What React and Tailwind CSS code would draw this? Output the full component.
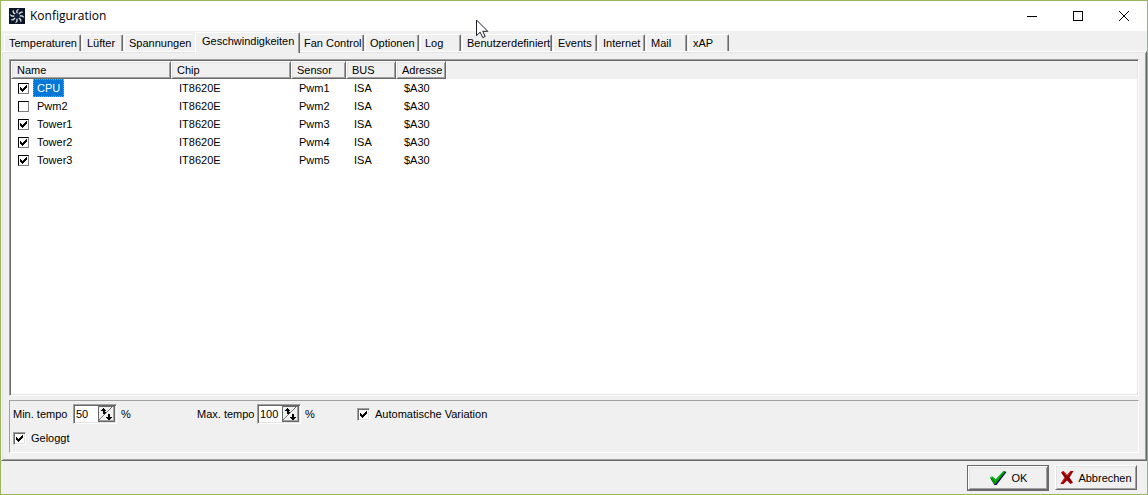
import React, { useState } from 'react';

const TABS = [
  { name: 'Temperaturen', width: 'w-[77px]' },
  { name: 'Lüfter', width: 'w-[41px]' },
  { name: 'Spannungen', width: 'w-[70px]' },
  { name: 'Geschwindigkeiten', width: 'w-[105px]' },
  { name: 'Fan Control', width: 'w-[65px]' },
  { name: 'Optionen', width: 'w-[54px]' },
  { name: 'Log', width: 'w-[41px]' },
  { name: 'Benutzerdefiniert', width: 'w-[90px]' },
  { name: 'Events', width: 'w-[44px]' },
  { name: 'Internet', width: 'w-[47px]' },
  { name: 'Mail', width: 'w-[41px]' },
  { name: 'xAP', width: 'w-[41px]' },
];

const COLUMNS = [
  { name: 'Name', width: 'w-[160px]' },
  { name: 'Chip', width: 'w-[120px]' },
  { name: 'Sensor', width: 'w-[55px]' },
  { name: 'BUS', width: 'w-[50px]' },
  { name: 'Adresse', width: 'w-[50px]' },
];

const INITIAL_ROWS = [
  { name: 'CPU', sensor: 'Pwm1', checked: true },
  { name: 'Pwm2', sensor: 'Pwm2', checked: false },
  { name: 'Tower1', sensor: 'Pwm3', checked: true },
  { name: 'Tower2', sensor: 'Pwm4', checked: true },
  { name: 'Tower3', sensor: 'Pwm5', checked: true },
];

// classic 3D edges, two pixels deep
const SUNKEN =
  'border border-t-[#a0a0a0] border-l-[#a0a0a0] border-b-white border-r-white p-px shadow-[inset_1px_1px_#696969,inset_-1px_-1px_#e3e3e3]';
const RAISED =
  'border border-t-white border-l-white border-b-[#696969] border-r-[#696969] shadow-[inset_1px_1px_#e3e3e3,inset_-1px_-1px_#a0a0a0]';

const FanIcon = () => (
  <svg width="16" height="16" viewBox="0 0 16 16" aria-hidden="true">
    <rect width="16" height="16" fill="#0b1526" />
    {[0, 45, 90, 135, 180, 225, 270, 315].map((angle) => (
      <path
        key={angle}
        d="M7.6 5.2C7 3.4 7.4 1.6 9.6 1L8.8 2.6C8.2 3.6 8.4 4.4 8.6 5.2Z"
        transform={`rotate(${angle} 8 8)`}
        fill="#f2f4f8"
        stroke="#c3cad6"
        strokeWidth="0.4"
      />
    ))}
    <circle cx="8" cy="8" r="2.6" fill="#14243f" />
  </svg>
);

const CheckMark = () => (
  <path d="M0 2h1v1h1v1h1v-1h1v-1h1v-1h1v-1h1v3h-1v1h-1v1h-1v1h-1v1h-1v-1h-1v-1h-1z" />
);

const CheckBox = ({ id, label, checked, onChange, flat }) => (
  <span className={`relative inline-block shrink-0 ${flat ? 'size-[11px]' : 'size-[13px]'}`}>
    <input
      id={id}
      type="checkbox"
      aria-label={label}
      checked={checked}
      onChange={onChange}
      className={
        flat
          ? 'block size-[11px] appearance-none border border-t-black border-l-black border-b-[#808080] border-r-[#808080] bg-white'
          : `block size-[13px] appearance-none bg-white ${SUNKEN}`
      }
    />
    {checked && (
      <svg
        width="7"
        height="7"
        viewBox="0 0 7 7"
        shapeRendering="crispEdges"
        className="pointer-events-none absolute inset-0 m-auto"
      >
        <CheckMark />
      </svg>
    )}
  </span>
);

const SpinBox = ({ id, label, value, onChange }) => {
  const step = (delta) => onChange(Math.min(100, Math.max(0, Number(value) + delta)));

  return (
    <div className="flex items-center">
      <label htmlFor={id} className="w-[60px]">
        {label}
      </label>
      <div className={`flex h-5 w-[44px] bg-white ${SUNKEN}`}>
        <input
          id={id}
          type="text"
          value={value}
          onChange={(e) => onChange(e.target.value)}
          className="w-[23px] pl-px pb-px outline-none"
        />
        <div className="relative h-4 w-[17px]">
          <svg width="17" height="16" viewBox="0 0 17 16" shapeRendering="crispEdges">
            <rect width="17" height="16" fill="#f0f0f0" />
            <path d="M0 15.5V0.5H17" fill="none" stroke="#696969" />
            <path d="M0 15.5H17M16.5 0V16" fill="none" stroke="#696969" />
            <path d="M1 14.5H16M15.5 1V15" fill="none" stroke="#a0a0a0" />
            <path d="M2 14L15 1" stroke="#fff" />
            <path d="M1 14L14 1" stroke="#696969" />
            <path d="M5 2h1v1h1v1h1v1h-1v1h1v1h-2v-2h-1v-0h-2v-1h1v-1h1z" />
            <path d="M5 4h2v4h-2z" />
            <path d="M10 8h2v3h2v1h-1v1h-1v1h-2v-1h-1v-1h-1v-1h2z" />
          </svg>
          <button
            type="button"
            aria-label={`${label} +`}
            onClick={() => step(1)}
            className="absolute top-0 left-0 h-2 w-full"
          />
          <button
            type="button"
            aria-label={`${label} -`}
            onClick={() => step(-1)}
            className="absolute bottom-0 left-0 h-2 w-full"
          />
        </div>
      </div>
      <span className="ml-1">%</span>
    </div>
  );
};

const TitleBar = () => (
  <header className="flex h-[30px] shrink-0 items-stretch bg-white">
    <div className="flex flex-1 items-center gap-[5px] pl-2 font-['Open_Sans','Noto_Sans',sans-serif] text-[12px]">
      <FanIcon />
      <h1>Konfiguration</h1>
    </div>
    <button type="button" aria-label="Minimieren" className="flex w-[46px] items-center justify-center">
      <svg width="10" height="11" shapeRendering="crispEdges">
        <path d="M0 5.5H10" stroke="#000" />
      </svg>
    </button>
    <button type="button" aria-label="Maximieren" className="flex w-[46px] items-center justify-center">
      <svg width="10" height="10" shapeRendering="crispEdges">
        <rect x="0.5" y="0.5" width="9" height="9" fill="none" stroke="#000" />
      </svg>
    </button>
    <button type="button" aria-label="Schließen" className="flex w-[46px] items-center justify-center">
      <svg width="10" height="10">
        <path d="M0 0L10 10M10 0L0 10" stroke="#000" />
      </svg>
    </button>
  </header>
);

const TabBar = ({ active, onSelect }) => {
  const activeIndex = TABS.findIndex((tab) => tab.name === active);

  return (
    <nav role="tablist" className="flex h-5 shrink-0 items-end gap-px pl-[3px]">
      {TABS.map((tab, i) => {
        const selected = tab.name === active;
        // the selected tab hides the right edge of its neighbour
        const edge =
          i === activeIndex - 1
            ? 'border-r-0'
            : 'border-r border-r-[#696969] shadow-[inset_-1px_0_#a0a0a0]';
        return (
          <button
            key={tab.name}
            type="button"
            role="tab"
            aria-selected={selected}
            onClick={() => onSelect(tab.name)}
            className={`shrink-0 rounded-t-[2px] border-t border-l border-t-white border-l-white bg-[#f0f0f0] text-left whitespace-nowrap ${tab.width} ${edge} ${
              selected ? 'relative z-10 -mr-[2px] -mb-[2px] h-[21px] pb-1 pl-[6px]' : 'h-[17px] pl-1'
            }`}
          >
            {tab.name}
          </button>
        );
      })}
    </nav>
  );
};

const SensorTable = ({ rows, selected, onSelect, onToggle }) => (
  <table className="w-full table-fixed border-collapse">
    <thead>
      <tr className="h-[18px] bg-[#f0f0f0]">
        {COLUMNS.map((col) => (
          <th key={col.name} className={`p-0 text-left font-normal ${col.width}`}>
            <div className={`h-[18px] pl-[5px] leading-4 ${RAISED}`}>{col.name}</div>
          </th>
        ))}
        <td />
      </tr>
    </thead>
    <tbody>
      {rows.map((row, i) => (
        <tr key={row.name} className="h-[18px]" onClick={() => onSelect(row.name)}>
          <td className="p-0">
            <div className="flex h-[18px] items-center gap-1 pl-[7px]">
              <CheckBox flat label={row.name} checked={row.checked} onChange={() => onToggle(i)} />
              <span
                className={`flex h-[18px] items-center border border-dotted px-[3px] ${
                  row.name === selected
                    ? 'border-[#ff8728] bg-[#0078d7] text-white'
                    : 'border-transparent'
                }`}
              >
                {row.name}
              </span>
            </div>
          </td>
          <td className="p-0 pl-2">IT8620E</td>
          <td className="p-0 pl-2">{row.sensor}</td>
          <td className="p-0 pl-2">ISA</td>
          <td className="p-0 pl-2">$A30</td>
          <td />
        </tr>
      ))}
    </tbody>
  </table>
);

const Cursor = () => (
  <svg
    width="13"
    height="20"
    viewBox="0 0 13 20"
    className="pointer-events-none absolute top-[18px] left-[475px] z-20"
    aria-hidden="true"
  >
    <path
      d="M0.5 1V16.6L4.2 13.2L6.8 18.6L9.2 17.5L6.8 12.3H11.8Z"
      fill="#fff"
      stroke="#1a1a2a"
    />
  </svg>
);

const App = () => {
  const [tab, setTab] = useState('Geschwindigkeiten');
  const [rows, setRows] = useState(INITIAL_ROWS);
  const [selected, setSelected] = useState('CPU');
  const [min, setMin] = useState('50');
  const [max, setMax] = useState('100');
  const [auto, setAuto] = useState(true);
  const [logged, setLogged] = useState(true);

  const toggleRow = (index) => {
    setRows(rows.map((row, i) => (i === index ? { ...row, checked: !row.checked } : row)));
  };

  return (
    <div className="relative flex h-screen flex-col border border-[#9bb55f] bg-[#f0f0f0] font-['Liberation_Sans',Arial,sans-serif] text-[11px] leading-[14px] text-black">
      <TitleBar />
      <TabBar active={tab} onSelect={setTab} />

      <main className={`flex min-h-0 flex-1 flex-col gap-1 p-[7px] ${RAISED}`}>
        <div className={`min-h-0 flex-1 overflow-hidden bg-white ${SUNKEN}`}>
          <SensorTable rows={rows} selected={selected} onSelect={setSelected} onToggle={toggleRow} />
        </div>

        <section className="flex h-[53px] shrink-0 flex-col gap-[7px] border border-t-[#a0a0a0] border-l-[#a0a0a0] border-b-white border-r-white pt-[3px] pl-[3px]">
          <div className="flex h-5 items-center">
            <div className="w-[184px]">
              <SpinBox id="min" label="Min. tempo" value={min} onChange={setMin} />
            </div>
            <div className="w-[160px]">
              <SpinBox id="max" label="Max. tempo" value={max} onChange={setMax} />
            </div>
            <div className="flex items-center gap-[5px]">
              <CheckBox id="auto" checked={auto} onChange={() => setAuto(!auto)} />
              <label htmlFor="auto">Automatische Variation</label>
            </div>
          </div>
          <div className="flex items-center gap-[5px]">
            <CheckBox id="logged" checked={logged} onChange={() => setLogged(!logged)} />
            <label htmlFor="logged">Geloggt</label>
          </div>
        </section>
      </main>

      <footer className="flex h-[33px] shrink-0 items-start justify-end gap-[6px] pt-1 pr-[10px]">
        <div className="border border-[#696969]">
          <button type="button" className={`flex h-6 w-20 items-center justify-center gap-[5px] ${RAISED}`}>
            <svg width="18" height="16" viewBox="0 0 18 16" aria-hidden="true">
              <path d="M1.5 8.5L5 8L7.5 10.5L15 2L17.5 2L7.5 15H5.5Z" fill="#00005c" />
              <path d="M1 7.5L3.5 6.5L6.5 9.5L14.5 1H17L6.5 14H5Z" fill="#009a00" />
              <path d="M1.5 7.5L3.5 7L6.5 10.5L14.5 1.5" fill="none" stroke="#00d020" />
            </svg>
            OK
          </button>
        </div>
        <button type="button" className={`flex h-[25px] w-[82px] items-center justify-center gap-1 whitespace-nowrap ${RAISED}`}>
          <svg width="14" height="15" viewBox="0 0 14 15" aria-hidden="true">
            <path d="M1 2.5L3.5 1L7 5L10.5 1H13.5L9.5 7.5L13 12.5L10.5 14L7 10.5L3.5 14H0.5L4.5 7.5Z" fill="#900000" />
            <path d="M1.5 2.5L3.5 1.5L6.5 5.5M1 13.5L5 8M10.5 1.5L7.5 5.5" fill="none" stroke="#f02020" />
          </svg>
          Abbrechen
        </button>
      </footer>

      <Cursor />
    </div>
  );
};

export default App;
